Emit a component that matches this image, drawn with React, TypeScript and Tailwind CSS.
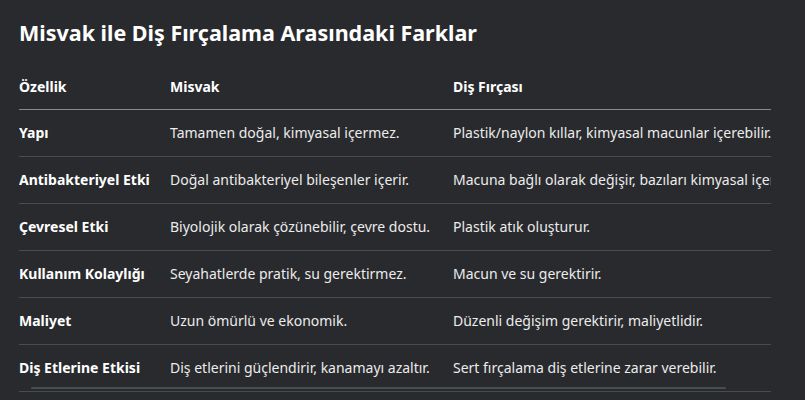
const rows = [
  ['Yapı', 'Tamamen doğal, kimyasal içermez.', 'Plastik/naylon kıllar, kimyasal macunlar içerebilir.'],
  ['Antibakteriyel Etki', 'Doğal antibakteriyel bileşenler içerir.', 'Macuna bağlı olarak değişir, bazıları kimyasal içerir.'],
  ['Çevresel Etki', 'Biyolojik olarak çözünebilir, çevre dostu.', 'Plastik atık oluşturur.'],
  ['Kullanım Kolaylığı', 'Seyahatlerde pratik, su gerektirmez.', 'Macun ve su gerektirir.'],
  ['Maliyet', 'Uzun ömürlü ve ekonomik.', 'Düzenli değişim gerektirir, maliyetlidir.'],
  ['Diş Etlerine Etkisi', 'Diş etlerini güçlendirir, kanamayı azaltır.', 'Sert fırçalama diş etlerine zarar verebilir.'],
];

export default function App() {
  return (
    <div className="w-[805px] h-[400px] overflow-hidden bg-[#292a2d] text-[#ececec] font-['Noto_Sans',sans-serif]">
      <h2 className="pl-[19px] pt-[19px] text-[21.5px] leading-[28px] font-bold text-white">
        Misvak ile Diş Fırçalama Arasındaki Farklar
      </h2>
      <div className="relative ml-[19px] mt-[14px] w-[752px] overflow-hidden">
        <table className="w-max min-w-full border-collapse text-[14px] whitespace-nowrap">
          <thead>
            <tr className="h-[48px] border-b border-[#8a8a8a]">
              <th className="w-[151px] pt-[4px] text-left font-bold text-white">Özellik</th>
              <th className="w-[283px] pt-[4px] text-left font-bold text-white">Misvak</th>
              <th className="pt-[4px] text-left font-bold text-white">Diş Fırçası</th>
            </tr>
          </thead>
          <tbody>
            {rows.map((r) => (
              <tr key={r[0]} className="h-[47px] border-b border-[#4a4b4e]">
                <td className="font-bold text-white">{r[0]}</td>
                <td>{r[1]}</td>
                <td>{r[2]}</td>
              </tr>
            ))}
          </tbody>
        </table>
        <div className="absolute left-[12px] bottom-[3px] h-[2px] w-[695px] rounded bg-[#464f4c]" />
      </div>
    </div>
  );
}
